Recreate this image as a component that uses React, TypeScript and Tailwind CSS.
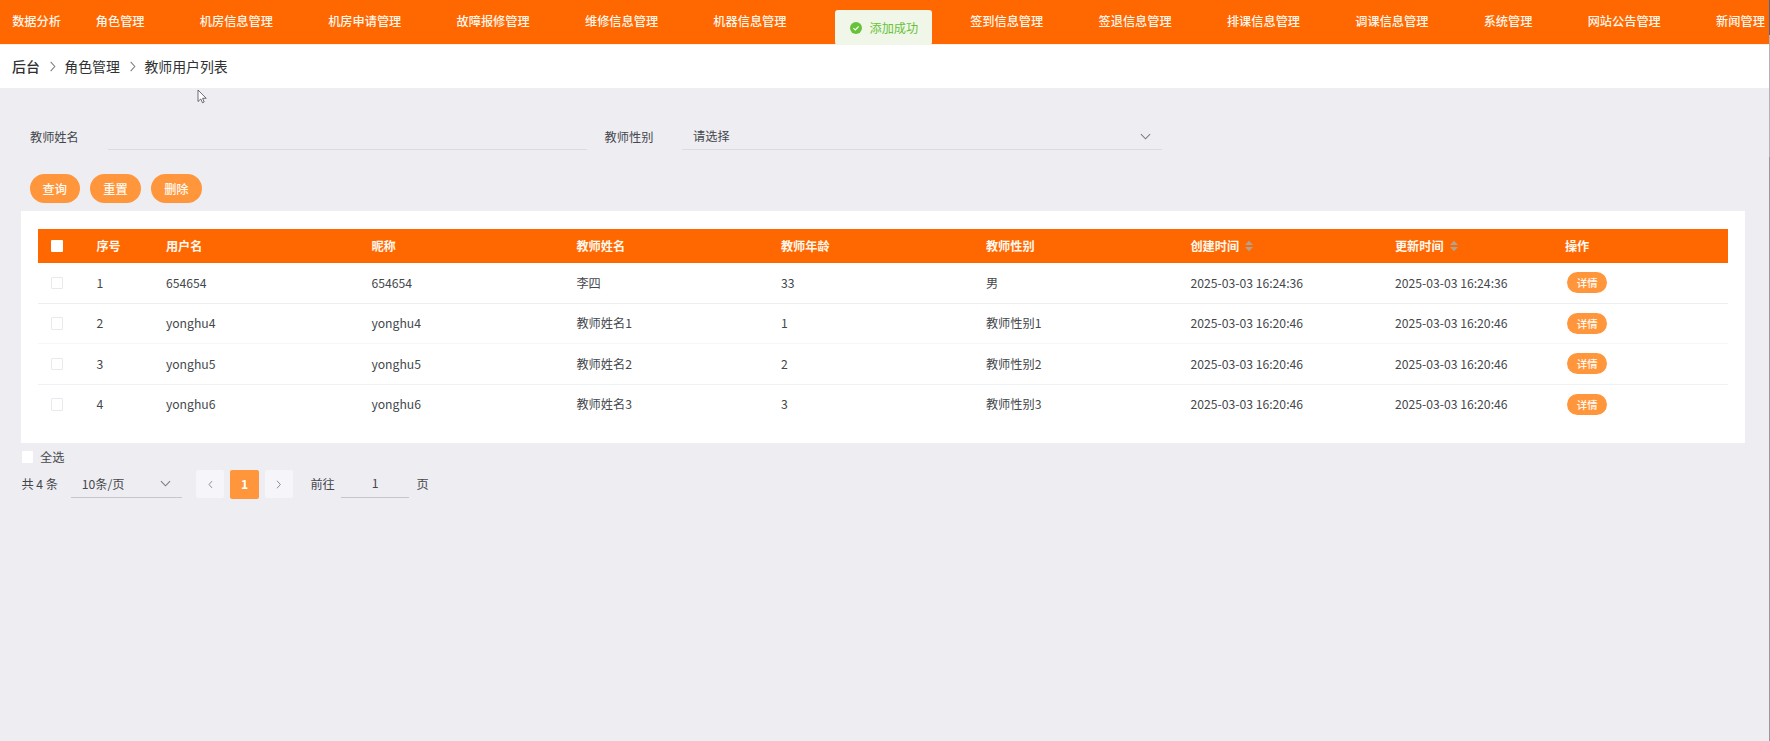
import React from "react";

const navItems: { label: string; width: string }[] = [
  { label: "数据分析", width: "w-[83.6px]" },
  { label: "角色管理", width: "w-[104px]" },
  { label: "机房信息管理", width: "w-[128.4px]" },
  { label: "机房申请管理", width: "w-[128.4px]" },
  { label: "故障报修管理", width: "w-[128.4px]" },
  { label: "维修信息管理", width: "w-[128.4px]" },
  { label: "机器信息管理", width: "w-[128.4px]" },
  { label: "", width: "w-[128.4px]" },
  { label: "签到信息管理", width: "w-[128.4px]" },
  { label: "签退信息管理", width: "w-[128.4px]" },
  { label: "排课信息管理", width: "w-[128.4px]" },
  { label: "调课信息管理", width: "w-[128.4px]" },
  { label: "系统管理", width: "w-[104px]" },
  { label: "网站公告管理", width: "w-[128.4px]" },
  { label: "新闻管理", width: "w-[50px]" },
];

const columns = [
  { label: "序号" },
  { label: "用户名" },
  { label: "昵称" },
  { label: "教师姓名" },
  { label: "教师年龄" },
  { label: "教师性别" },
  { label: "创建时间", sortable: true },
  { label: "更新时间", sortable: true },
  { label: "操作" },
];

const rows = [
  ["1", "654654", "654654", "李四", "33", "男", "2025-03-03 16:24:36", "2025-03-03 16:24:36"],
  ["2", "yonghu4", "yonghu4", "教师姓名1", "1", "教师性别1", "2025-03-03 16:20:46", "2025-03-03 16:20:46"],
  ["3", "yonghu5", "yonghu5", "教师姓名2", "2", "教师性别2", "2025-03-03 16:20:46", "2025-03-03 16:20:46"],
  ["4", "yonghu6", "yonghu6", "教师姓名3", "3", "教师性别3", "2025-03-03 16:20:46", "2025-03-03 16:20:46"],
];

const rowBorders = ["border-[#eceff2]", "border-[#f6f6f8]", "border-[#eff2f4]", "border-transparent"];

const grid =
  "grid grid-cols-[45.5px_69.5px_205.5px_205px_204.5px_205px_204.5px_204.5px_170px_1fr] items-center pl-[12.5px]";

function Chevron({ dir, className }: { dir: "down" | "left" | "right"; className: string }) {
  const d = { down: "M1 3.5 L6 8.5 L11 3.5", left: "M8 1.5 L4 6 L8 10.5", right: "M4 1 L8.5 6 L4 11" }[dir];
  return (
    <svg viewBox="0 0 12 12" className={className} fill="none" stroke="currentColor" strokeWidth="1.1">
      <path d={d} />
    </svg>
  );
}

function SortIcon() {
  return (
    <svg viewBox="0 0 8 12" className="ml-[6px] h-[12px] w-[8px]" fill="#b0a393">
      <path d="M4 0.8 L8 5 H0 Z M0 7 H8 L4 11.2 Z" />
    </svg>
  );
}

function Nav() {
  return (
    <nav className="flex h-[44px] overflow-hidden bg-[#ff6700] pl-[12.2px] text-[12.2px] leading-[43px] font-medium text-[#fff6ea]">
      {navItems.map((item, i) => (
        <div key={i} className={"shrink-0 whitespace-nowrap " + item.width}>
          {item.label}
        </div>
      ))}
    </nav>
  );
}

function Toast() {
  return (
    <div className="absolute top-[10px] left-[835px] flex h-[35px] w-[97px] items-center rounded-[3px] bg-[#f0f7e8] pl-[14.5px] text-[12.2px] text-[#67c23a]">
      <svg viewBox="0 0 12 12" className="mr-[8px] h-[12px] w-[12px]">
        <circle cx="6" cy="6" r="6" fill="#67c23a" />
        <path d="M3.4 6.1 L5.3 7.9 L8.6 4.5" fill="none" stroke="#fff" strokeWidth="1.1" />
      </svg>
      <span className="pt-[2px]">添加成功</span>
    </div>
  );
}

function Breadcrumb() {
  return (
    <div className="flex h-[44.4px] items-center border-t border-[#fff0e2] bg-white pl-[12px] text-[13.9px] text-[#303133]">
      <span className="font-medium">后台</span>
      <Chevron dir="right" className="mr-[6.5px] ml-[7px] h-[11px] w-[11px] text-[#77797e]" />
      <span>角色管理</span>
      <Chevron dir="right" className="mr-[6.5px] ml-[7px] h-[11px] w-[11px] text-[#77797e]" />
      <span>教师用户列表</span>
    </div>
  );
}

export default function App() {
  return (
    <div className="relative h-[741px] w-[1770px] overflow-hidden bg-[#eeedf2] font-['Noto_Sans_CJK_SC',sans-serif] text-[12.2px] text-[#44474c]">
      <Nav />
      <Breadcrumb />

      <div className="mt-[29.1px] flex h-[33px] items-center pl-[30px]">
        <span className="w-[77.6px] pt-[6px]">教师姓名</span>
        <div className="h-[33px] w-[479px] border-b border-[#dcdbe0]" />
        <span className="ml-[18px] w-[77.5px] pt-[6px]">教师性别</span>
        <div className="flex h-[33px] w-[480px] items-center justify-between border-b border-[#dcdbe0] pt-[6px] pr-[11.5px] pl-[11px]">
          <span>请选择</span>
          <Chevron dir="down" className="h-[11px] w-[11px] text-[#77797e]" />
        </div>
      </div>

      <div className="mt-[24px] flex gap-[10.3px] pl-[29.5px] font-medium text-[#fffaf2]">
        {["查询", "重置", "删除"].map((t) => (
          <button key={t} className="h-[28.5px] w-[50.5px] rounded-full bg-[#ff963c] leading-[28px]">
            {t}
          </button>
        ))}
      </div>

      <main className="mt-[8px] ml-[21.4px] h-[232px] w-[1724px] bg-white px-[17px] pt-[18px]">
        <div className={grid + " h-[34px] bg-[#ff6700] font-bold text-[#fff8ee]"}>
          <span className="h-[12px] w-[12px] rounded-[1px] bg-white" />
          {columns.map((c) => (
            <div key={c.label} className="flex items-center">
              {c.label}
              {c.sortable && <SortIcon />}
            </div>
          ))}
        </div>
        {rows.map((r, i) => (
          <div key={i} className={grid + " h-[40.6px] border-b " + rowBorders[i]}>
            <span className="h-[12.5px] w-[12.5px] rounded-[1px] border border-[#e9e9ed] bg-white" />
            {r.map((v, j) => (
              <span key={j}>{v}</span>
            ))}
            <button className="ml-[2px] h-[21px] w-[40.5px] rounded-full bg-[#ff963c] text-[10.4px] leading-[21px] font-medium text-[#fffaf2]">
              详情
            </button>
          </div>
        ))}
      </main>

      <div className="mt-[5px] flex h-[18px] items-center pl-[21.5px]">
        <span className="mr-[7.5px] h-[12px] w-[11px] rounded-[1px] bg-white" />
        全选
      </div>
      <div className="mt-[4px] flex h-[29px] items-center pl-[21.4px]">
        <span className="w-[50px]">共 4 条</span>
        <div className="flex h-[28px] w-[111px] items-center justify-between border-b border-[#c6c6cc] pr-[11px] pl-[10.3px]">
          <span className="pt-px">10条/页</span>
          <Chevron dir="down" className="h-[11px] w-[11px] text-[#77797e]" />
        </div>
        <div className="ml-[14px] flex h-[28px] w-[28px] items-center justify-center rounded-[2px] bg-[#f5f5fa]">
          <Chevron dir="left" className="h-[9px] w-[9px] text-[#77797e]" />
        </div>
        <div className="ml-[6px] flex h-[28.5px] w-[28.5px] items-center justify-center rounded-[2px] bg-[#ff963c] font-bold text-white">
          1
        </div>
        <div className="ml-[6px] flex h-[28px] w-[28px] items-center justify-center rounded-[2px] bg-[#f5f5fa]">
          <Chevron dir="right" className="h-[9px] w-[9px] text-[#77797e]" />
        </div>
        <span className="ml-[17.5px] w-[31px]">前往</span>
        <div className="h-[28px] w-[67.5px] border-b border-[#c6c6cc] text-center leading-[27px]">1</div>
        <span className="ml-[7.5px]">页</span>
      </div>

      <Toast />
      <svg viewBox="0 0 10 15" className="absolute top-[89px] left-[197px] h-[15px] w-[10px]">
        <path
          d="M1 1 V12.5 L3.8 10 L5.5 13.8 L7.2 13 L5.6 9.3 H9.2 Z"
          fill="#fff"
          stroke="#4a4a50"
          strokeWidth="0.8"
        />
      </svg>
      <div className="absolute top-0 right-0 flex h-[741px] w-px flex-col">
        <div className="h-[35px] bg-[#4d6390]" />
        <div className="h-[122px] bg-[#b4b4b8]" />
        <div className="flex-1 bg-[#98989c]" />
      </div>
    </div>
  );
}
